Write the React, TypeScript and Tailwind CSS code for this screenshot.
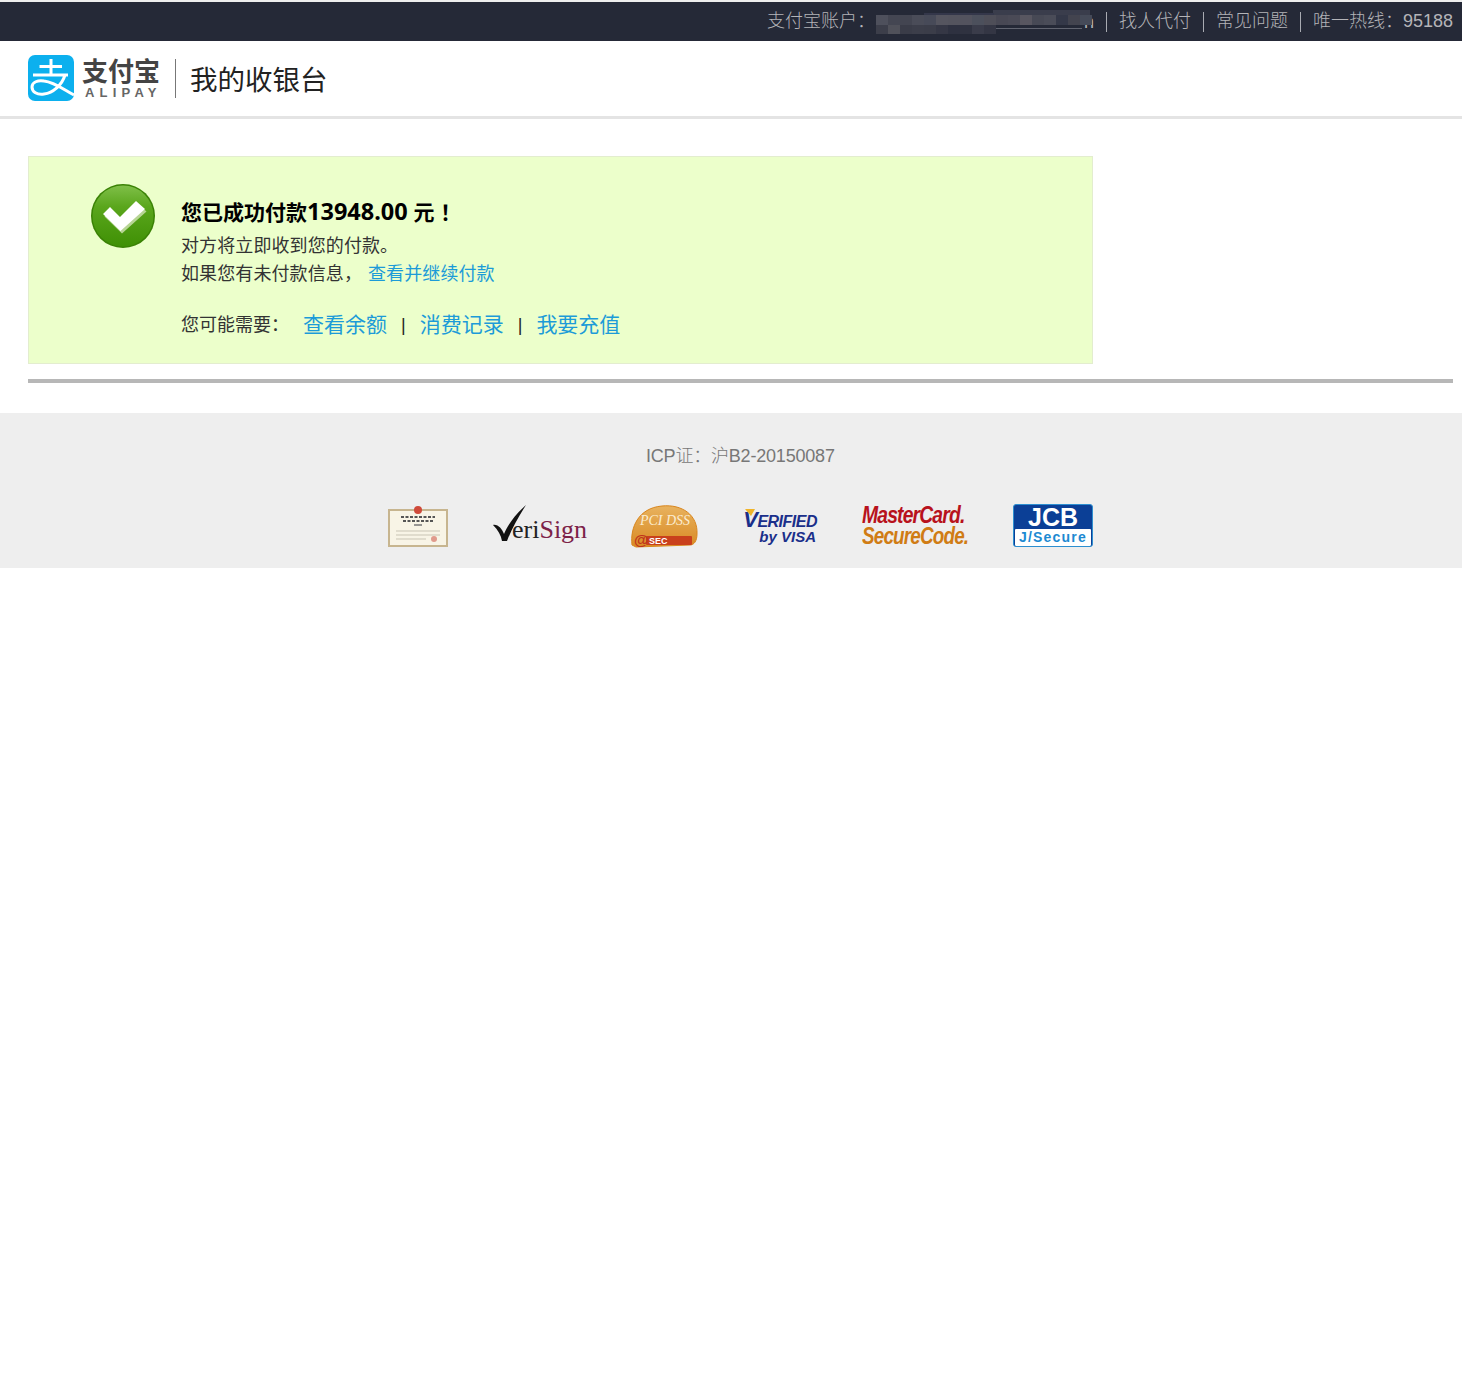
const cjk = "font-['Liberation_Sans','Noto_Sans_CJK_SC',sans-serif]";

const mosaicTop = ['#4e505c', '#444652', '#434551', '#4a4c58', '#474a58', '#55555f', '#54545e', '#53535e', '#4c505c', '#4e4e58', '#484854', '#4a4a56', '#585660', '#474955', '#4a4c58', '#343848', '#43444f', '#454a58'];
const mosaicBottom = ['#3c3e4a', '#50515a', '#3a3c48', '#3c3e4a', '#3b3d49', '#353745', '#2e3140', '#2f3240', '#3a3c4a', '#343644'];

function Mosaic() {
  return (
    <svg width="216" height="25" viewBox="0 0 216 25" className="absolute left-0 top-0">
      <rect x="117" y="0" width="97" height="6" fill="#3a3d4c" />
      <rect x="48" y="3" width="70" height="3" fill="#34374a" />
      {mosaicTop.map((fill, i) => (
        <rect key={i} x={i * 12} y={5} width="12" height="10" fill={fill} />
      ))}
      {mosaicBottom.map((fill, i) => (
        <rect key={i} x={i * 12} y={15} width="12" height="9" fill={fill} />
      ))}
      <rect x="120" y="18" width="86" height="1" fill="#8a8c96" opacity="0.6" />
    </svg>
  );
}

function AlipayMark() {
  return (
    <svg width="46" height="46" viewBox="0 0 46 46" className="shrink-0">
      <rect width="46" height="46" rx="7" fill="#0cb0ee" />
      <path
        d="M11.5 11.5h22.5M23 4v16M5 20h35M37 20c-3 10-12 18-21 19-7 1-12-2-12-7 0-5 6-7 12-6 10 1 19 8 30 14"
        fill="none"
        stroke="#fff"
        strokeWidth="3"
      />
    </svg>
  );
}

function SuccessIcon() {
  return (
    <svg width="64" height="64" viewBox="0 0 64 64" className="shrink-0">
      <defs>
        <linearGradient id="ball" x1="0" y1="0" x2="0" y2="1">
          <stop offset="0" stopColor="#7fbf48" />
          <stop offset="0.35" stopColor="#5aa61c" />
          <stop offset="1" stopColor="#3f9005" />
        </linearGradient>
      </defs>
      <circle cx="32" cy="32" r="32" fill="#3a8205" />
      <circle cx="32" cy="32" r="30.5" fill="url(#ball)" />
      <path d="M12 30l7-7 10 10 16-16 9 8-24.500 22z" fill="#b7d594" transform="translate(1.500 2.500)" />
      <path d="M12 30l7-7 10 10 16-16 9 8-24.500 22z" fill="#fff" />
    </svg>
  );
}

function Certificate() {
  return (
    <svg width="60" height="42" viewBox="0 0 60 42" className="shrink-0">
      <rect x="1" y="5" width="58" height="36" fill="#f8f4e6" stroke="#c7b58f" strokeWidth="2" />
      <circle cx="30" cy="5" r="4" fill="#cf4a3a" />
      <path d="M13 12h34M15 16h30" stroke="#555" strokeWidth="2" strokeDasharray="3 1.500" />
      <path d="M26 20h8" stroke="#777" strokeWidth="1.500" />
      <path d="M8 26h44M8 30h44M8 34h30" stroke="#c9c4b4" strokeWidth="1" />
      <circle cx="46" cy="34" r="3" fill="#e09a8c" />
    </svg>
  );
}

function VeriSign() {
  return (
    <div className="flex h-[44px] w-[92px] items-end font-['Liberation_Serif',serif] text-[26px] leading-[36px]">
      <svg width="33" height="36" viewBox="0 0 33 36" className="-mr-[14px] mt-[1px] shrink-0 self-start">
        <path d="M0 20C5 19 9 24 11 29 15 19 23 9 33 0 26 11 19 23 14 36H9C8 30 5 25 0 20z" fill="#111" />
      </svg>
      <span className="text-[#222]">eri</span>
      <span className="text-[#7d2248]">Sign</span>
    </div>
  );
}

function PciBadge() {
  return (
    <svg width="68" height="44" viewBox="0 0 68 44" className="shrink-0">
      <defs>
        <linearGradient id="gold" x1="0" y1="0" x2="0" y2="1">
          <stop offset="0" stopColor="#e8b25e" />
          <stop offset="1" stopColor="#d98a24" />
        </linearGradient>
      </defs>
      <path d="M2 41C0 24 8 4 32 2 52 0 68 11 67 30 67 37 64 41 60 41L6 43z" fill="url(#gold)" stroke="#d9861e" />
      <text x="35" y="21" textAnchor="middle" fontFamily="Liberation Serif, serif" fontSize="14" fontStyle="italic" fill="#fbecd0">PCI DSS</text>
      <rect x="16" y="32" width="46" height="9" rx="1" fill="#c9401c" />
      <text x="4" y="41" fontFamily="Liberation Sans, sans-serif" fontSize="15" fontWeight="700" fill="#c0341c">@</text>
      <text x="19" y="40" fontFamily="Liberation Sans, sans-serif" fontSize="9" fontWeight="700" fill="#fff">SEC</text>
    </svg>
  );
}

function VerifiedByVisa() {
  return (
    <div className="relative flex w-[74px] flex-col items-end font-['Liberation_Sans',sans-serif] font-bold italic leading-none text-[#1a2f8a]">
      <svg width="10" height="8" viewBox="0 0 10 8" className="absolute -top-[1px] left-[2px]">
        <path d="M0 1h10L6 8z" fill="#f0b429" />
      </svg>
      <span className="text-[16px] tracking-[-0.5px]">
        <span className="text-[22px]">V</span>ERIFIED
      </span>
      <span className="-mt-[2px] mr-[1px] text-[15px]">by VISA</span>
    </div>
  );
}

function MasterCardSecure() {
  return (
    <div className="flex w-[106px] flex-col font-['Liberation_Sans',sans-serif] text-[23px] font-bold italic leading-[21px] tracking-[-1px]">
      <span className="origin-left scale-x-[0.84] whitespace-nowrap text-[#b8121c]">MasterCard.</span>
      <span className="origin-left scale-x-[0.82] whitespace-nowrap text-[#d07c14]">SecureCode.</span>
    </div>
  );
}

function JcbBadge() {
  return (
    <div className="mt-[1px] flex h-[43px] w-[80px] flex-col self-start overflow-hidden rounded-[3px] border border-[#2d8fd0] bg-[#0b3f96] font-['Liberation_Sans',sans-serif] font-bold">
      <span className="h-[24px] text-center text-[25px] leading-[25px] text-white">JCB</span>
      <span className="mx-[1px] mb-[1px] flex-1 rounded-[1px] bg-white text-center text-[14px] leading-[17px] tracking-[1.2px] text-[#1d8ad2]">J/Secure</span>
    </div>
  );
}

function TopLink({ children }: { children: React.ReactNode }) {
  return (
    <>
      <span className="mx-[12px] h-[20px] w-px bg-[#a9abb2]" />
      <span>{children}</span>
    </>
  );
}

export default function App() {
  return (
    <div className={`min-h-[1392px] bg-white ${cjk}`}>
      <div className="h-[2px] bg-[#eeeeee]" />
      <div className="flex h-[39px] items-center justify-end bg-[#252937] pr-[9px] text-[18px] font-light text-[#b4b4b8]">
        <span>支付宝账户：</span>
        <span className="relative ml-[1px] h-[24px] w-[218px] text-right leading-[24px]">
          n
          <Mosaic />
        </span>
        <TopLink>找人代付</TopLink>
        <TopLink>常见问题</TopLink>
        <TopLink>
          唯一热线：<span>95188</span>
        </TopLink>
      </div>

      <header className="flex h-[78px] items-start border-b-[3px] border-[#e4e4e4] pl-[28px] pt-[14px]">
        <AlipayMark />
        <div className="ml-[8px] flex w-[78px] flex-col items-start pt-[3px]">
          <span className="whitespace-nowrap text-[26px] font-bold leading-[28px] text-[#444]">支付宝</span>
          <span className="ml-[3px] whitespace-nowrap text-[13px] font-bold leading-[14px] tracking-[5.2px] text-[#666]">ALIPAY</span>
        </div>
        <span className="ml-[15px] mt-[4px] h-[39px] w-px bg-[#777]" />
        <h1 className="ml-[14px] mt-[4px] text-[27.500px] font-normal leading-[44px] text-[#222]">我的收银台</h1>
      </header>

      <main className="pl-[28px] pr-[9px] pt-[37px]">
        <section className="flex h-[208px] w-[1065px] border border-[#e3edcf] bg-[#ecffcb] pl-[62px] pt-[27px]">
          <SuccessIcon />
          <div className="ml-[26px] pt-[13px] text-[#333]">
            <p className="text-[21px] font-bold leading-[28px] text-black">
              您已成功付款<span className="font-['Noto_Sans',sans-serif] text-[23.500px]">13948.00</span> 元 ！
            </p>
            <p className="mt-[5px] text-[18px] leading-[28px] tracking-[0.1px]">对方将立即收到您的付款。</p>
            <p className="text-[18px] leading-[28px] tracking-[0.1px]">
              如果您有未付款信息，
              <a className="ml-[6px] text-[#1c9bd8]">查看并继续付款</a>
            </p>
            <div className="mt-[23px] flex items-center text-[18px] leading-[28px]">
              <span>您可能需要：</span>
              <a className="ml-[14px] text-[21px] text-[#1c9bd8]">查看余额</a>
              <span className="mx-[14px] text-[#222]">|</span>
              <a className="text-[21px] text-[#1c9bd8]">消费记录</a>
              <span className="mx-[14px] text-[#222]">|</span>
              <a className="text-[21px] text-[#1c9bd8]">我要充值</a>
            </div>
          </div>
        </section>
        <div className="mt-[15px] h-[4px] bg-[#b7b7b7]" />
      </main>

      <footer className="mt-[30px] h-[155px] bg-[#eeeeee] pt-[30px]">
        <p className="pl-[646px] text-[18px] font-light leading-[26px] tracking-[-0.2px] text-[#777]">ICP证：沪B2-20150087</p>
        <div className="mt-[34px] flex h-[46px] items-center gap-[45px] pl-[388px]">
          <Certificate />
          <VeriSign />
          <PciBadge />
          <VerifiedByVisa />
          <MasterCardSecure />
          <JcbBadge />
        </div>
      </footer>
    </div>
  );
}
